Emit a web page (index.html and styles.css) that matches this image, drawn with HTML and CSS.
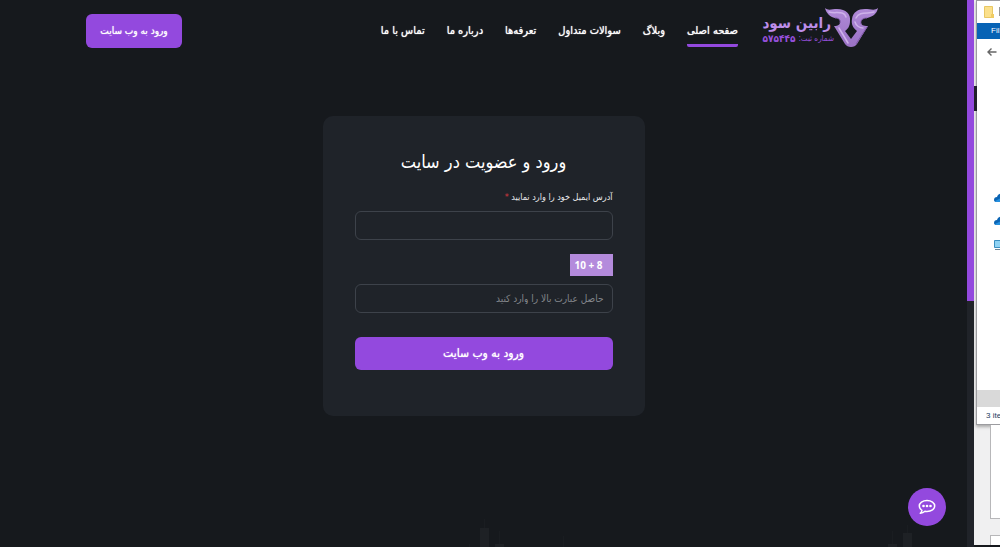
FILE: index.html
```html
<!DOCTYPE html>
<html lang="fa">
<head>
<meta charset="utf-8">
<title>رابین سود</title>
<link rel="stylesheet" href="styles.css">
</head>
<body>
<div class="desktop">
  <div class="page" dir="rtl">
    <header class="header">
      <a class="logo" href="#">
        <svg class="logo-mark" viewBox="0 0 54 41" aria-hidden="true">
          <defs>
            <linearGradient id="horn" x1="0" y1="0" x2="0" y2="1">
              <stop offset="0" stop-color="#b08ad8"/>
              <stop offset="1" stop-color="#9a72c4"/>
            </linearGradient>
          </defs>
          <path fill="url(#horn)" d="M1 0C4 3 8 1 13 1C22 1 27 6 26 13C26 18 24 21 21 23L27 31L33 23C29 20 27 16 28 11C29 4 34 1 41 1C46 1 51 3 54 0C53 6 48 9 43 10C39 10 37 12 37 14C37 17 39 18 44 18L33 36Q31 39 27 39Q23 39 21 36L10 18C15 18 16 16 16 14C16 11 14 10 11 10C6 9 2 5 1 0Z"/>
          <path fill="none" stroke="#ceb2ea" stroke-width="1.500" stroke-linecap="round" d="M5 4C11 6 20 2 22 9M15 20L24 35M50 4C44 6 35 3 32 10M31 14C32 18 36 20 39 20"/>
          <path fill="none" stroke="#7f58a8" stroke-width="1" d="M43 19L32 36M11 10C15 10 17 12 16 15M37 16C36 12 39 10 43 10"/>
        </svg>
        <span class="logo-text">
          <strong class="logo-name">رابین سود</strong>
          <span class="logo-reg"><span>شماره ثبت:</span> <b>۵۷۵۴۴۵</b></span>
        </span>
      </a>
      <nav class="nav">
        <a class="nav-link active" href="#">صفحه اصلی</a>
        <a class="nav-link" href="#">وبلاگ</a>
        <a class="nav-link" href="#">سوالات متداول</a>
        <a class="nav-link" href="#">تعرفه‌ها</a>
        <a class="nav-link" href="#">درباره ما</a>
        <a class="nav-link" href="#">تماس با ما</a>
      </nav>
      <button class="btn header-btn" type="button">ورود به وب سایت</button>
    </header>

    <main class="main">
      <form class="card">
        <h1 class="title">ورود و عضویت در سایت</h1>
        <label class="label" for="email">آدرس ایمیل خود را وارد نمایید <span class="required">*</span></label>
        <input class="field" id="email" type="email">
        <label class="captcha" for="answer" dir="ltr">10 + 8</label>
        <input class="field" id="answer" type="text" placeholder="حاصل عبارت بالا را وارد کنید">
        <button class="btn submit" type="submit">ورود به وب سایت</button>
      </form>
    </main>

    <svg class="candles" viewBox="0 0 967 34" aria-hidden="true">
      <path fill="#1e2125" d="M480 15h9v19h-9zM495 31h9v3h-9zM888 31h9v3h-9zM903 20h9v14h-9z"/>
      <path fill="#1a1d21" d="M484 6h1v9h-1zM499 18h1v13h-1zM469 31h1v3h-1zM563 23h1v11h-1zM892 18h1v13h-1zM907 12h1v8h-1z"/>
    </svg>
    <button class="chat" type="button" aria-label="گفتگو">
      <svg viewBox="0 0 18 16" aria-hidden="true">
        <path fill="none" stroke="#fff" stroke-width="1.5" stroke-linejoin="round" d="M9 1.5C4.600 1.500 1.300 3.800 1.300 7C1.300 8.800 2.300 10.300 4 11.300C3.900 12.500 3.200 13.500 2.300 14.300C4.300 14.200 5.900 13.300 6.900 12.300C7.600 12.400 8.300 12.500 9 12.500C13.400 12.500 16.700 10.100 16.700 7C16.700 3.800 13.400 1.500 9 1.500Z"/>
        <circle cx="5.500" cy="7" r="1.300" fill="#fff"/><circle cx="9" cy="7" r="1.300" fill="#fff"/><circle cx="12.500" cy="7" r="1.300" fill="#fff"/>
      </svg>
    </button>
  </div>

  <div class="scrollbar"><div class="thumb"></div></div>

  <aside class="behind">
    <div class="edge-mark"></div>
    <section class="explorer">
      <div class="explorer-title">
        <svg width="20" height="14" viewBox="0 0 20 14" aria-hidden="true">
          <path fill="#fbe08b" stroke="#e8c765" d="M.5 1.500h8v11h-8z"/><path fill="#f0cc62" d="M7 9h3v4H7z"/><path fill="#999" d="M15 2h1v9h-1z"/>
        </svg>
      </div>
      <div class="ribbon">Fil</div>
      <div class="toolbar">
        <svg width="10" height="8" viewBox="0 0 10 8" aria-hidden="true"><path fill="none" stroke="#666" stroke-width="1.400" d="M9.500 4H1M4.500 .5L1 4l3.500 3.500"/></svg>
      </div>
      <div class="tree">
        <svg width="14" height="10" viewBox="0 0 14 10" aria-hidden="true"><path fill="#0a64b4" d="M0 7C0 5 1 4 3 4C4 1 7 0 9 1L14 5v4H2C1 9 0 8 0 7Z"/><path fill="#2590df" d="M1 8L7 5l7 2v2H2z"/></svg>
        <svg width="14" height="10" viewBox="0 0 14 10" aria-hidden="true"><path fill="#0a64b4" d="M0 7C0 5 1 4 3 4C4 1 7 0 9 1L14 5v4H2C1 9 0 8 0 7Z"/><path fill="#2590df" d="M1 8L7 5l7 2v2H2z"/></svg>
        <svg width="14" height="12" viewBox="0 0 14 12" aria-hidden="true"><path fill="#8fd3f4" stroke="#3b8fc0" d="M.5 1.500h12v7H.5z"/><path fill="#6b8798" d="M1 10h12v1H1z"/></svg>
      </div>
      <div class="hscroll"></div>
      <div class="status">3 ite</div>
    </section>
    <div class="panel panel-grow"></div>
    <div class="panel panel-last"></div>
  </aside>
</div>
</body>
</html>
```
FILE: styles.css
```css
* { box-sizing: border-box; }

body {
  margin: 0;
  background: #16191d;
  color: #fff;
  font-family: "DejaVu Sans Condensed", "DejaVu Sans", sans-serif;
  font-stretch: condensed;
}

a { color: inherit; text-decoration: none; }
button, input { font: inherit; color: inherit; }
svg { display: block; flex: none; }

.desktop { display: flex; min-height: 100vh; overflow: hidden; }

.page { flex: 1; position: relative; min-width: 0; }

.header {
  display: flex;
  align-items: flex-start;
  padding: 8px 89px 0 86px;
}

.logo { display: flex; width: 118px; }
.logo-mark { width: 54px; height: 41px; }
.logo-text { display: flex; flex-direction: column; align-items: flex-end; margin-top: 5px; margin-right: -10px; white-space: nowrap; }
.logo-name { font-size: 15px; line-height: 20px; color: #bd8eea; }
.logo-reg { display: flex; gap: 3px; font-size: 8px; line-height: 12px; color: #9650dc; }
.logo-reg b { font-size: 10px; }

.nav { display: flex; gap: 22px; margin-right: 22px; font-size: 11px; line-height: 16px; white-space: nowrap; text-shadow: 0 0 1px #fff; }
.nav-link { padding: 15px 0 5px; }
.active { border-bottom: 3px solid #9349de; border-radius: 2px; }

.btn {
  border: 0;
  border-radius: 6px;
  background: #9349de;
  cursor: pointer;
  white-space: nowrap;
  text-shadow: 0 0 1px #fff;
}
.header-btn { width: 96px; height: 34px; margin: 6px auto 0 0; padding: 0 0 2px; font-size: 10px; }

.main { display: flex; justify-content: center; padding-top: 67px; }

.card {
  display: flex;
  flex-direction: column;
  align-items: flex-start;
  width: 322px;
  padding: 32px 32px 46px;
  border-radius: 10px;
  background: #1f2329;
}
.title { align-self: center; margin: 0 0 11px; font-size: 18px; font-weight: normal; line-height: 28px; }
.label { margin-bottom: 4px; font-size: 9px; line-height: 20px; color: #e6e7e9; }
.required { color: #d8383f; }
.field {
  width: 100%;
  height: 29px;
  padding: 0 8px 1px;
  border: 1px solid #3d424a;
  border-radius: 6px;
  background: transparent;
  font-size: 10px;
}
.field::placeholder { color: #83868b; opacity: 1; }
.captcha {
  width: 43px;
  margin: 14px 0 8px;
  padding-left: 5px;
  background: #b48bdc;
  font: bold 10px/22px "Open Sans", sans-serif;
}
.submit { width: 100%; height: 33px; margin: 24px 0 0; padding: 0 0 2px; font-size: 12px; }

.candles { position: absolute; left: 0; bottom: 0; width: 100%; }

.chat {
  position: absolute;
  right: 21px;
  bottom: 21px;
  display: grid;
  place-items: center;
  width: 38px;
  height: 38px;
  padding: 0;
  border: 0;
  border-radius: 50%;
  background: #9349de;
}
.chat svg { width: 18px; height: 16px; }

.scrollbar { width: 7px; background: #202329; }
.thumb { height: 55vh; background: #9349de; }

.behind {
  display: flex;
  flex-direction: column;
  position: relative;
  width: 26px;
  overflow: hidden;
  border-bottom: 2px solid #16191d;
  background: #f0f0f1;
  color: #223b5e;
  font-family: "Liberation Sans", sans-serif;
  font-size: 8px;
}
.edge-mark { position: absolute; left: 0; top: 86px; width: 3px; height: 25px; background: #20202a; }
.explorer {
  display: flex;
  flex-direction: column;
  height: 425px;
  margin-left: 2px;
  border: solid #9c9ca0;
  border-width: 1px 0 1px 1px;
  background: #fff;
  box-shadow: 0 2px 3px #aaa;
}
.explorer-title { height: 22px; padding: 4px 0 0 7px; overflow: hidden; }
.ribbon { padding-left: 14px; background: #0763b5; color: #fff; line-height: 16px; }
.toolbar { padding: 9px 0 0 10px; }
.tree { flex: 1; display: flex; flex-direction: column; gap: 13px; padding: 137px 0 0 17px; }
.hscroll { height: 17px; background: #d9d9d9; }
.status { padding-left: 9px; line-height: 17px; white-space: nowrap; }
.panel { margin-left: 16px; border: 1px solid #b7b7b9; border-right: 0; background: #fff; }
.panel-grow { flex: 1; border-top: 0; }
.panel-last { height: 10px; margin-top: 16px; border-bottom: 0; }
```
